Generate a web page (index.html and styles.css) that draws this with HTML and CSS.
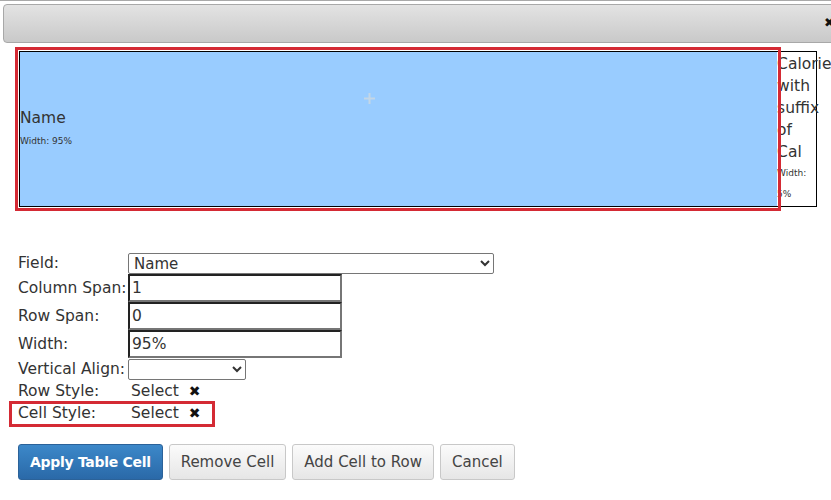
FILE: index.html
```html
<!DOCTYPE html>
<html lang="en">
<head>
    <meta charset="UTF-8">
    <meta name="viewport" content="width=device-width, initial-scale=1.0">
    <title>Table Cell Editor</title>
    <link rel="stylesheet" href="styles.css">
</head>
<body>
    <div class="dialog">
        <div class="titlebar">
            <span class="close">&#10006;</span>
        </div>

        <div class="preview">
            <table class="layout-table">
                <tr>
                    <td class="cell cell-selected" style="width: 95%;">
                        <svg class="cell-add" width="11" height="11" viewBox="0 0 11 11">
                            <path d="M5.5 0v11M0 5.5h11" stroke="#c4d6e6" stroke-width="2"/>
                        </svg>
                        <div class="cell-name">Name</div>
                        <div class="cell-width">Width: 95%</div>
                    </td>
                    <td class="cell cell-plain" style="width: 5%;">
                        <div class="cell-name">Calories with suffix of Cal</div>
                        <div class="cell-width">Width: 5%</div>
                    </td>
                </tr>
            </table>
        </div>

        <div class="cell-form">
            <label class="form-label" for="field">Field:</label>
            <select id="field" class="select select-wide">
                <option>Name</option>
            </select>

            <label class="form-label" for="colspan">Column Span:</label>
            <input id="colspan" class="text-input" type="text" value="1">

            <label class="form-label" for="rowspan">Row Span:</label>
            <input id="rowspan" class="text-input" type="text" value="0">

            <label class="form-label" for="width">Width:</label>
            <input id="width" class="text-input" type="text" value="95%">

            <label class="form-label" for="valign">Vertical Align:</label>
            <select id="valign" class="select select-small">
                <option></option>
            </select>

            <span class="form-label">Row Style:</span>
            <span class="style-pick">Select <span class="clear">&#10006;</span></span>

            <div class="highlight-row">
                <span class="form-label">Cell Style:</span>
                <span class="style-pick">Select <span class="clear">&#10006;</span></span>
            </div>
        </div>

        <div class="buttons">
            <button class="btn btn-primary">Apply Table Cell</button>
            <button class="btn">Remove Cell</button>
            <button class="btn">Add Cell to Row</button>
            <button class="btn">Cancel</button>
        </div>
    </div>
</body>
</html>
```

FILE: styles.css
```css
html, body {
    overflow: hidden;
}
body {
    margin: 0;
    font-family: 'DejaVu Sans', Verdana, sans-serif;
    font-size: 15.5px;
    color: #333;
    background-color: white;
}
.dialog {
    width: 860px;
    border-top: 1px solid #a9a9a9;
}
.titlebar {
    margin: 3px 0 0 3px;
    height: 37px;
    border: 1px solid #a8a8a8;
    border-radius: 4px;
    background: linear-gradient(#e3e3e3, #c9c9c9);
    position: relative;
}
.close {
    position: absolute;
    left: 820px;
    top: 10px;
    font-size: 13px;
    color: #111;
}
.preview {
    margin: 8px 0 0 19px;
}
.layout-table {
    width: 798px;
    table-layout: fixed;
    border-collapse: separate;
    border-spacing: 0;
}
.cell {
    box-sizing: border-box;
    height: 156px;
    padding: 0;
    border-top: 1px solid #000;
    border-bottom: 1px solid #000;
}
.cell-selected {
    position: relative;
    background-color: #99ccff;
    border-left: 1px solid #000;
    vertical-align: middle;
    outline: 3px solid #d42a34;
    outline-offset: 1px;
}
.cell-plain {
    padding-top: 1px;
    background-color: white;
    border-right: 1px solid #000;
    vertical-align: top;
}
.cell-add {
    position: absolute;
    left: 344px;
    top: 41px;
}
.cell-name {
    line-height: 22px;
}
.cell-width {
    font-size: 9px;
    line-height: 21px;
}
.cell-selected .cell-width {
    margin-top: 2px;
}
.cell-form {
    display: grid;
    grid-template-columns: 110px auto;
    align-items: center;
    justify-items: start;
    margin: 45px 0 0 18px;
}
.form-label {
    line-height: 22px;
}
.select {
    height: 21px;
    padding: 0 1px;
    font-family: inherit;
    font-size: 15px;
    color: #333;
    border: 1px solid #767676;
    border-radius: 2px;
    background-color: white;
}
.select-wide {
    width: 366px;
}
.select-small {
    width: 118px;
    margin-top: 1px;
}
.text-input {
    box-sizing: border-box;
    width: 214px;
    height: 28px;
    padding: 0 2px;
    font-family: inherit;
    font-size: 15.5px;
    color: #333;
    border-width: 2px;
    border-style: solid;
    border-color: #222 #767676 #767676 #222;
}
.style-pick {
    padding-left: 3px;
    line-height: 22px;
}
.clear {
    margin-left: 5px;
    font-size: 14px;
    color: #111;
}
.highlight-row {
    grid-column: 1 / 3;
    display: grid;
    grid-template-columns: 110px auto;
    position: relative;
}
.highlight-row::before {
    content: "";
    position: absolute;
    left: -9px;
    top: -1px;
    width: 200px;
    height: 20px;
    border: 3px solid #d42a34;
}
.buttons {
    display: flex;
    gap: 6px;
    margin: 20px 0 0 18px;
}
.btn {
    height: 36px;
    padding: 0 11px;
    font-family: inherit;
    font-size: 15px;
    color: #444;
    border: 1px solid #c8c8c8;
    border-radius: 3px;
    background: linear-gradient(#fbfbfb, #e6e6e6);
    cursor: pointer;
}
.btn-primary {
    padding: 0 11px;
    color: white;
    font-size: 14px;
    font-weight: bold;
    letter-spacing: -0.3px;
    border-color: #2b6299;
    background: linear-gradient(#3c88c9, #2a69a8);
}
```
